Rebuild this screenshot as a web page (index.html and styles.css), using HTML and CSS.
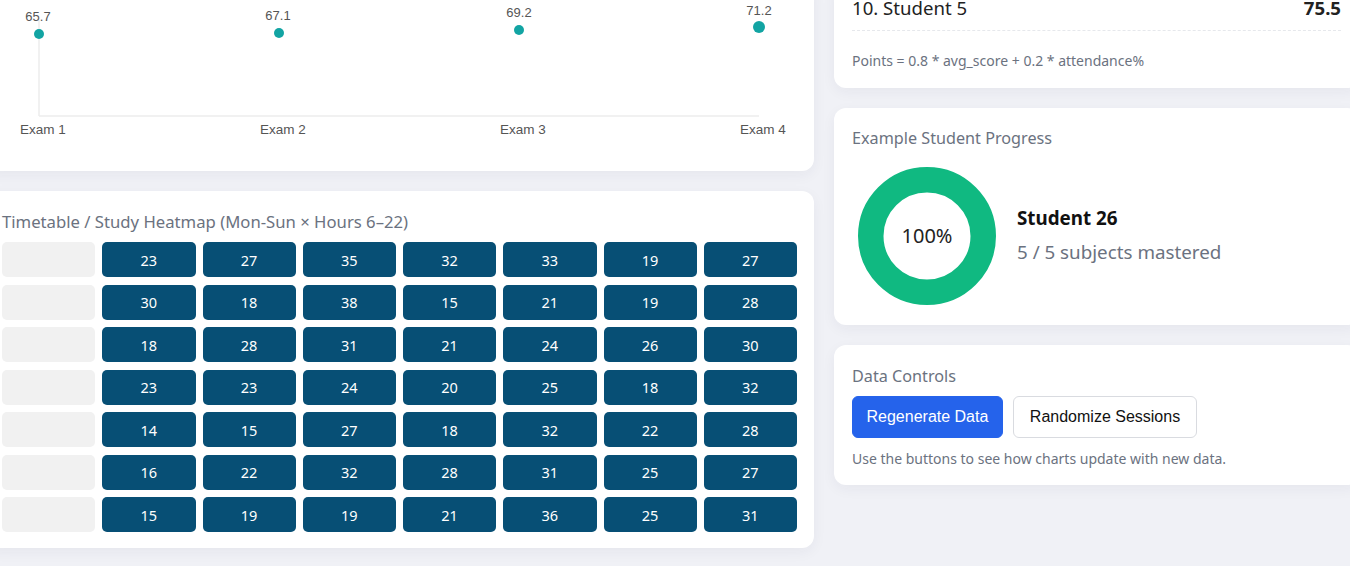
FILE: index.html
```html
<!DOCTYPE html>
<html lang="en">
<head>
<meta charset="utf-8">
<title>Dashboard</title>
<link rel="stylesheet" href="styles.css">
</head>
<body>
<div class="layout">
  <div class="col">
    <section class="card chart-card">
      <svg class="line-chart" width="798" height="191" viewBox="0 -20 798 191">
        <line x1="39" y1="20" x2="39" y2="116" stroke="#ececec" stroke-width="1.5"/>
        <line x1="39" y1="116" x2="759" y2="116" stroke="#ececec" stroke-width="1.5"/>
        <g class="val">
          <text x="38" y="21" text-anchor="middle">65.7</text>
          <text x="278" y="20" text-anchor="middle">67.1</text>
          <text x="519" y="17" text-anchor="middle">69.2</text>
          <text x="759" y="15" text-anchor="middle">71.2</text>
        </g>
        <g fill="#12a4a3">
          <circle cx="39" cy="34" r="5"/>
          <circle cx="279" cy="33" r="5"/>
          <circle cx="519" cy="30" r="5"/>
          <circle cx="759" cy="27" r="6"/>
        </g>
        <g class="axis">
          <text x="43" y="134" text-anchor="middle">Exam 1</text>
          <text x="283" y="134" text-anchor="middle">Exam 2</text>
          <text x="523" y="134" text-anchor="middle">Exam 3</text>
          <text x="763" y="134" text-anchor="middle">Exam 4</text>
        </g>
      </svg>
    </section>
    <section class="card heat-card">
      <h3 class="card-title">Timetable / Study Heatmap (Mon-Sun × Hours 6–22)</h3>
      <div class="heatmap">
        <div class="cell empty"></div><div class="cell">23</div><div class="cell">27</div><div class="cell">35</div><div class="cell">32</div><div class="cell">33</div><div class="cell">19</div><div class="cell">27</div>
        <div class="cell empty"></div><div class="cell">30</div><div class="cell">18</div><div class="cell">38</div><div class="cell">15</div><div class="cell">21</div><div class="cell">19</div><div class="cell">28</div>
        <div class="cell empty"></div><div class="cell">18</div><div class="cell">28</div><div class="cell">31</div><div class="cell">21</div><div class="cell">24</div><div class="cell">26</div><div class="cell">30</div>
        <div class="cell empty"></div><div class="cell">23</div><div class="cell">23</div><div class="cell">24</div><div class="cell">20</div><div class="cell">25</div><div class="cell">18</div><div class="cell">32</div>
        <div class="cell empty"></div><div class="cell">14</div><div class="cell">15</div><div class="cell">27</div><div class="cell">18</div><div class="cell">32</div><div class="cell">22</div><div class="cell">28</div>
        <div class="cell empty"></div><div class="cell">16</div><div class="cell">22</div><div class="cell">32</div><div class="cell">28</div><div class="cell">31</div><div class="cell">25</div><div class="cell">27</div>
        <div class="cell empty"></div><div class="cell">15</div><div class="cell">19</div><div class="cell">19</div><div class="cell">21</div><div class="cell">36</div><div class="cell">25</div><div class="cell">31</div>
      </div>
    </section>
  </div>
  <div class="col">
    <section class="card board-card">
      <div class="board-row"><span>10. Student 5</span><span class="pts">75.5</span></div>
      <p class="note">Points = 0.8 * avg_score + 0.2 * attendance%</p>
    </section>
    <section class="card progress-card">
      <h3 class="card-title">Example Student Progress</h3>
      <div class="progress">
        <svg class="donut" width="150" height="150" viewBox="0 0 150 150">
          <circle cx="75" cy="75" r="56.25" fill="none" stroke="#10b981" stroke-width="25.5"/>
          <text x="75" y="82" text-anchor="middle" class="donut-text">100%</text>
        </svg>
        <div class="info">
          <div class="name">Student 26</div>
          <div class="sub">5 / 5 subjects mastered</div>
        </div>
      </div>
    </section>
    <section class="card controls-card">
      <h3 class="card-title">Data Controls</h3>
      <div class="buttons">
        <button class="btn primary">Regenerate Data</button>
        <button class="btn secondary">Randomize Sessions</button>
      </div>
      <p class="hint">Use the buttons to see how charts update with new data.</p>
    </section>
  </div>
</div>
</body>
</html>
```

FILE: styles.css
```css
html, body {
  margin: 0;
  padding: 0;
}
body {
  background: #f0f1f6;
  font-family: "Noto Sans", "Open Sans", sans-serif;
  color: #222;
  overflow: hidden;
  width: 1350px;
  height: 566px;
}
.layout {
  display: grid;
  grid-template-columns: 830px 525px;
  column-gap: 20px;
  margin: -20px 0 0 -16px;
}
.col {
  display: flex;
  flex-direction: column;
  gap: 20px;
}
.card {
  background: #fff;
  border-radius: 12px;
  box-shadow: 0 4px 14px rgba(30, 40, 80, 0.05);
}
.card-title {
  margin: 0;
  font-weight: 400;
  font-size: 16.2px;
  line-height: 24px;
  color: #6b7280;
}
.chart-card {
  height: 191px;
  padding: 0 16px;
  box-sizing: border-box;
}
.line-chart {
  display: block;
}
.line-chart text {
  font-family: "Liberation Sans", Arial, sans-serif;
  fill: #555;
}
.val text { font-size: 13px; }
.axis text { font-size: 13.5px; }

.heat-card {
  padding: 19px 17px 16px 18px;
}
.heat-card .card-title {
  font-size: 16.7px;
  margin-bottom: 8px;
}
.heatmap {
  display: grid;
  grid-template-columns: repeat(8, 1fr);
  column-gap: 7px;
  row-gap: 7.5px;
}
.cell {
  height: 35px;
  border-radius: 5px;
  background: #074f75;
  color: #fff;
  font-size: 14.5px;
  display: flex;
  align-items: center;
  justify-content: center;
}
.cell.empty {
  background: #f1f1f1;
}

.board-card {
  padding: 15px 18px 17px 18px;
}
.board-row {
  display: flex;
  justify-content: space-between;
  font-size: 18.6px;
  line-height: 26px;
  padding-bottom: 9px;
  border-bottom: 1px dashed #e6e8ec;
}
.pts {
  font-weight: 700;
}
.note {
  margin: 20px 0 0;
  font-size: 14px;
  line-height: 20px;
  color: #6b7280;
}

.progress-card {
  padding: 18px 18px 14px 18px;
}
.progress-card .card-title {
  margin-bottom: 11px;
}
.progress {
  display: flex;
  align-items: center;
  gap: 15px;
}
.donut {
  display: block;
}
.donut-text {
  font-family: "Noto Sans", sans-serif;
  font-size: 20px;
  fill: #222;
}
.info {
  display: flex;
  flex-direction: column;
  gap: 6px;
  margin-top: -2px;
}
.name {
  font-size: 18.8px;
  font-weight: 700;
  line-height: 28px;
  color: #111;
}
.sub {
  font-size: 18.8px;
  line-height: 28px;
  color: #6b7280;
}

.controls-card {
  padding: 19px 18px 16px 18px;
}
.controls-card .card-title {
  margin-bottom: 8px;
}
.buttons {
  display: flex;
  gap: 10px;
}
.btn {
  height: 42px;
  border-radius: 6px;
  font-family: "Liberation Sans", Arial, sans-serif;
  font-size: 16px;
  cursor: pointer;
}
.btn.primary {
  padding: 0 13.5px;
  background: #2563eb;
  color: #fff;
  border: 1px solid #2563eb;
}
.btn.secondary {
  padding: 0 16px;
  background: #fff;
  color: #111;
  border: 1px solid #d9dbe0;
}
.hint {
  margin: 11px 0 0;
  font-size: 14px;
  line-height: 20px;
  color: #6b7280;
}
```
